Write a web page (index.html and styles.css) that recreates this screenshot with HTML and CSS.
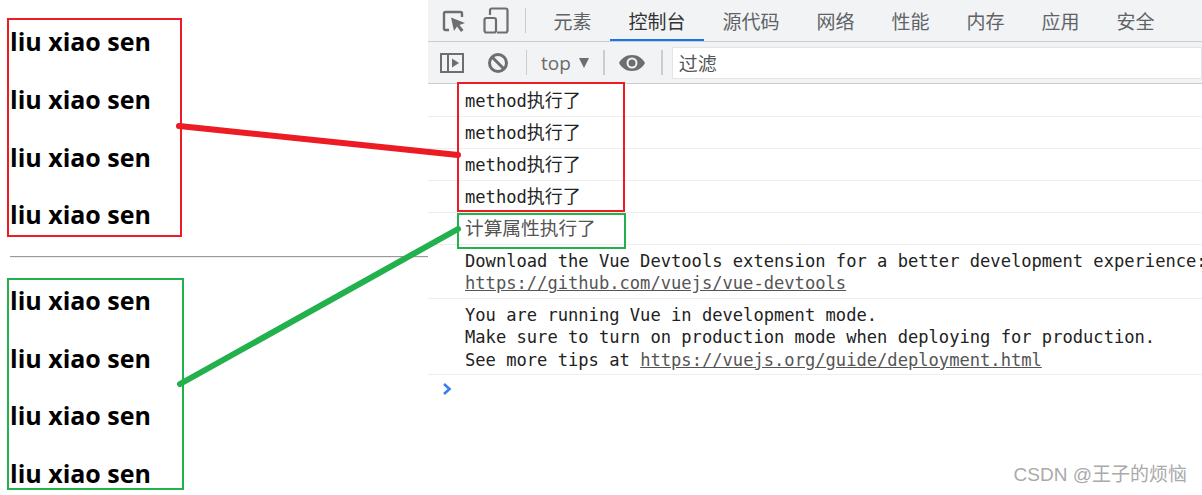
FILE: index.html
```html
<!DOCTYPE html>
<html lang="zh">
<head>
<meta charset="utf-8">
<title>Vue computed vs method</title>
<link rel="stylesheet" href="styles.css">
</head>
<body>
<div class="page">
  <section class="demo">
    <div class="name-group">
      <h2>liu xiao sen</h2>
      <h2>liu xiao sen</h2>
      <h2>liu xiao sen</h2>
      <h2>liu xiao sen</h2>
    </div>
    <hr class="rule">
    <div class="name-group">
      <h2>liu xiao sen</h2>
      <h2>liu xiao sen</h2>
      <h2>liu xiao sen</h2>
      <h2>liu xiao sen</h2>
    </div>
  </section>
  <section class="devtools">
    <div class="tabbar">
      <div class="tool-icons">
        <svg class="icon" width="24" height="24" viewBox="0 0 24 24"><path d="M7 21H3.500Q2 21 2 19.500V4.500Q2 3 3.500 3H18.500Q20 3 20 4.500V8" fill="none" stroke="#6e6e6e" stroke-width="2.400"/><path d="M9 8.500L23 14L17.500 16L21.500 21L19 23L15 17.500L12 22Z" fill="#6e6e6e"/></svg>
        <svg class="icon" width="26" height="27" viewBox="0 0 26 27"><path d="M7 8V3.500Q7 1.500 9 1.500H22.500Q24.500 1.500 24.500 3.500V23.500Q24.500 25.500 22.500 25.500H14" fill="none" stroke="#6e6e6e" stroke-width="2.200"/><rect x="1.500" y="11" width="11.500" height="14.500" rx="2" fill="none" stroke="#6e6e6e" stroke-width="2.200"/></svg>
      </div>
      <span class="divider tall"></span>
      <nav class="tabs">
        <a class="tab">元素</a>
        <a class="tab active">控制台</a>
        <a class="tab">源代码</a>
        <a class="tab">网络</a>
        <a class="tab">性能</a>
        <a class="tab">内存</a>
        <a class="tab">应用</a>
        <a class="tab">安全</a>
      </nav>
    </div>
    <div class="toolbar">
      <svg class="sidebar-icon" width="24" height="20" viewBox="0 0 24 20"><rect x="1" y="1" width="22" height="18" fill="none" stroke="#6e6e6e" stroke-width="2"/><path d="M8 1V19" stroke="#6e6e6e" stroke-width="2"/><path d="M12 5.500L19 10L12 14.500Z" fill="#6e6e6e"/></svg>
      <svg class="block-icon" width="22" height="22" viewBox="0 0 22 22"><circle cx="11" cy="11" r="8.500" fill="none" stroke="#6e6e6e" stroke-width="3"/><path d="M5 5L17 17" stroke="#6e6e6e" stroke-width="3"/></svg>
      <span class="divider short first"></span>
      <span class="context">top</span>
      <span class="caret"></span>
      <span class="divider short wide"></span>
      <svg class="eye-icon" width="26" height="16" viewBox="0 0 26 16"><path fill-rule="evenodd" d="M13 0C7 0 2.500 3.500 0 8C2.500 12.500 7 16 13 16C19 16 23.500 12.500 26 8C23.500 3.500 19 0 13 0ZM13 13.500A5.500 5.500 0 1 1 13 2.500A5.500 5.500 0 0 1 13 13.500ZM13 4.500A3.500 3.500 0 1 0 13 11.500A3.500 3.500 0 0 0 13 4.500Z" fill="#6e6e6e"/></svg>
      <span class="divider short wide"></span>
      <div class="filter">过滤</div>
    </div>
    <div class="console">
      <div class="row">method<span class="cjk">执行了</span></div>
      <div class="row">method<span class="cjk">执行了</span></div>
      <div class="row">method<span class="cjk">执行了</span></div>
      <div class="row">method<span class="cjk">执行了</span></div>
      <div class="row"><span class="cjk wide-cjk">计算属性执行了</span></div>
      <div class="row block">Download the Vue Devtools extension for a better development experience:<br><a class="link">https://github.com/vuejs/vue-devtools</a></div>
      <div class="row block">You are running Vue in development mode.<br>Make sure to turn on production mode when deploying for production.<br>See more tips at <a class="link">https://vuejs.org/guide/deployment.html</a></div>
      <div class="prompt"><svg width="10" height="12" viewBox="0 0 10 12"><path d="M2 1L7.500 6L2 11" fill="none" stroke="#3b7cf0" stroke-width="2.600"/></svg></div>
    </div>
  </section>
  <svg class="annotations" width="1202" height="495" viewBox="0 0 1202 495">
    <rect x="8" y="19" width="173" height="217" class="red-box"/>
    <rect x="8" y="279" width="175" height="210" class="green-box"/>
    <rect x="458" y="83" width="166" height="128" class="red-box"/>
    <rect x="458" y="214" width="167" height="34" class="green-box"/>
    <path d="M179 126L458 155" class="red-line"/>
    <path d="M180 384L458 229" class="green-line"/>
  </svg>
  <div class="watermark">CSDN @王子的烦恼</div>
</div>
</body>
</html>
```
FILE: styles.css
```css
* { box-sizing: border-box; }
html, body { margin: 0; padding: 0; background: #fff; }
.page {
  position: relative;
  width: 1202px;
  height: 495px;
  overflow: hidden;
  display: flex;
}
.demo {
  width: 428px;
  flex: none;
  padding: 25.200px 0 0 10px;
  font-family: "Open Sans", "Noto Sans", sans-serif;
}
.name-group { display: flex; flex-direction: column; gap: 25.700px; }
.name-group h2 {
  margin: 0;
  height: 32px;
  font-size: 25px;
  line-height: 32px;
  font-weight: 700;
  color: #000;
}
.rule {
  margin: 26px 0 25.800px;
  height: 2px;
  border: 0;
  border-top: 1px solid #999;
  border-bottom: 1px solid #eee;
}
.devtools {
  flex: 1;
  min-width: 0;
  display: flex;
  flex-direction: column;
  font-family: "Noto Sans CJK SC", sans-serif;
}
.tabbar {
  height: 42px;
  flex: none;
  display: flex;
  align-items: center;
  background: #f1f3f4;
  border-bottom: 1px solid #ccc;
  padding-left: 14px;
}
.tool-icons { display: flex; align-items: center; gap: 17px; width: 83px; }
.divider { display: block; flex: none; width: 1px; background: #ccc; }
.divider.tall { height: 25px; margin-top: 0; }
.tabs { display: flex; height: 41px; margin-left: 9px; }
.tab {
  padding: 0 18.500px;
  font-size: 19px;
  line-height: 41px;
  color: #5f6368;
  border-bottom: 2px solid transparent;
}
.tab.active { color: #333; border-bottom-color: #1a73e8; }
.toolbar {
  height: 42px;
  flex: none;
  display: flex;
  align-items: center;
  background: #f1f3f4;
  border-bottom: 1px solid #ccc;
  padding-left: 12px;
}
.sidebar-icon { flex: none; margin-right: 23px; }
.block-icon { flex: none; margin-right: 17px; }
.divider.short { height: 25px; }
.divider.wide { width: 2px; }
.context {
  margin-left: 14px;
  font-family: "Open Sans", sans-serif;
  font-size: 19px;
  color: #6a6a6a;
}
.caret {
  margin-left: 8px;
  margin-right: 14px;
  width: 0;
  height: 0;
  border-left: 5.500px solid transparent;
  border-right: 5.500px solid transparent;
  border-top: 10px solid #6e6e6e;
}
.eye-icon { flex: none; margin: 0 16px 0 14px; }
.filter {
  flex: 1;
  margin-left: 9px;
  height: 32px;
  background: #fff;
  border: 1px solid #e4e4e4;
  padding-left: 6px;
  font-size: 19px;
  line-height: 30px;
  color: #555;
}
.console {
  flex: 1;
  padding-top: 1px;
  font-family: "DejaVu Sans Mono", "Noto Sans CJK SC", monospace;
  font-size: 17.125px;
  color: #222;
}
.row {
  height: 32px;
  padding-left: 37px;
  border-bottom: 1px solid #eee;
  line-height: 28px;
  white-space: nowrap;
}
.row.block {
  height: auto;
  padding-top: 5px;
  padding-bottom: 3.200px;
  line-height: 22.400px;
}
.cjk { font-family: "Noto Sans CJK SC", sans-serif; font-size: 18px; }
.wide-cjk { font-size: 18.700px; color: #555; }
.link { color: #555; text-decoration: underline; }
.prompt { padding: 8px 0 0 14px; line-height: 12px; }
.annotations { position: absolute; left: 0; top: 0; pointer-events: none; }
.red-box { fill: none; stroke: #ed1c24; stroke-width: 2; }
.green-box { fill: none; stroke: #22b14c; stroke-width: 2; }
.red-line { stroke: #ed1c24; stroke-width: 6; stroke-linecap: round; fill: none; }
.green-line { stroke: #22b14c; stroke-width: 6; stroke-linecap: round; fill: none; }
.watermark {
  position: absolute;
  right: 15px;
  top: 462px;
  font-family: "Liberation Sans", "Noto Sans CJK SC", sans-serif;
  font-size: 19px;
  line-height: 26px;
  color: #aaa;
}
```
